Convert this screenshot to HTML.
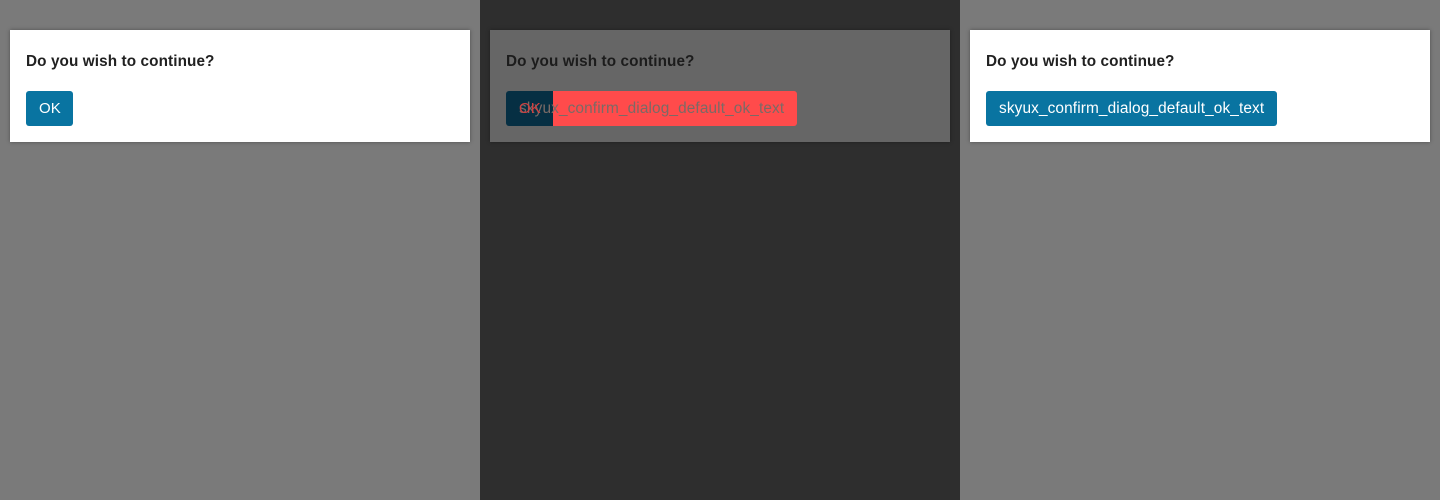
<!DOCTYPE html>
<html><head><style>
body{margin:0;width:1440px;height:500px;position:relative;font-family:"Liberation Sans","DejaVu Sans",sans-serif;overflow:hidden}
.p{position:absolute;top:0;width:480px;height:500px}
.d{position:absolute;left:10px;top:30px;width:460px;height:112px;box-shadow:0 0 4px rgba(0,0,0,.35)}
.t{position:absolute;left:16px;top:23px;font-size:15.3px;font-weight:600;color:#212121;letter-spacing:.1px}
.b{position:absolute;left:16px;top:61px;height:35px;border-radius:3px;background:#0974a1;color:#fff;font-size:15.4px;line-height:36px;padding:0 13px;white-space:nowrap;letter-spacing:.12px}
</style></head><body>
<div class="p" style="left:0;background:#7a7a7a"><div class="d" style="background:#fff"><div class="t">Do you wish to continue?</div><div class="b" style="width:21px;font-size:15px">OK</div></div></div>
<div class="p" style="left:480px;background:#2e2e2e"><div class="d" style="background:#666"><div class="t" style="color:#1c1c1c">Do you wish to continue?</div>
<div class="b" style="width:244px;padding:0;left:63px;background:#ff4b4b;border-radius:0 3px 3px 0"></div>
<div class="b" style="width:47px;padding:0;background:#062f43;border-radius:3px 0 0 3px"></div>
<div class="b" style="background:none;color:#7a6a66">skyux_confirm_dialog_default_ok_text</div>
<div class="b" style="background:none;color:#d04040;font-size:15px">OK</div>
</div></div>
<div class="p" style="left:960px;background:#7a7a7a"><div class="d" style="background:#fff"><div class="t">Do you wish to continue?</div><div class="b">skyux_confirm_dialog_default_ok_text</div></div></div>
</body></html>
